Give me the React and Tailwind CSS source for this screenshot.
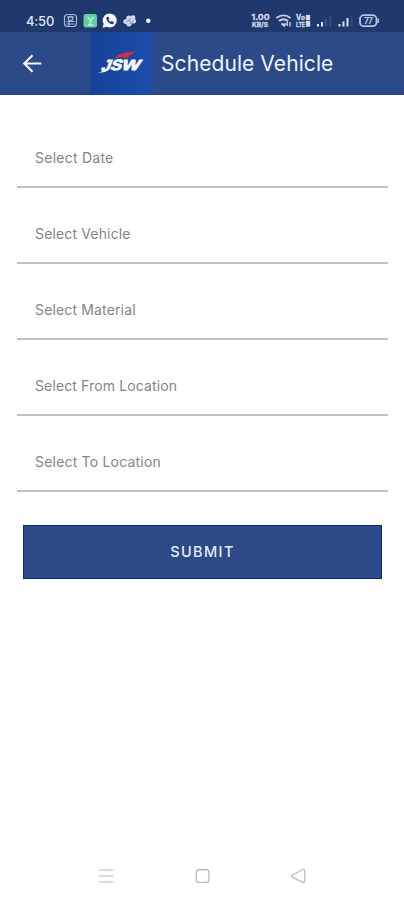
/**
 * Schedule Vehicle Page - form for booking a vehicle trip
 */

const fields = [
  { label: 'Select Date', tracking: 'tracking-[0.25px]' },
  { label: 'Select Vehicle', tracking: 'tracking-[0.15px]' },
  { label: 'Select Material', tracking: 'tracking-[0.15px]' },
  { label: 'Select From Location', tracking: 'tracking-[0.13px]' },
  { label: 'Select To Location', tracking: 'tracking-[0.2px]' },
];

function StatusBar() {
  return (
    <div className="flex h-8 items-start bg-[#1f396f] pl-[26px] pt-3">
      <span className="w-[34px] text-[13px] font-medium leading-[18px] tracking-[-0.2px] text-[#dfe6f7]">4:50</span>
      <svg width="344" height="18" viewBox="60 12 344 18" fill="none">
        {/* Notifications */}
        <g stroke="#a9b6d6" strokeWidth="1.2">
          <rect x="64.5" y="14.5" width="12" height="12" rx="3" />
          <circle cx="70.5" cy="18.5" r="2.2" />
          <path d="M67 17h7M66.5 21.5h8M66.5 24h8M69 21v5" />
        </g>
        <rect x="83.5" y="14" width="13.5" height="13.5" rx="2.5" fill="#62cfa3" />
        <path d="M87.5 17l3 3.5 3-3.5M90.5 20.5V25M88 25h5" stroke="#b9f3dc" strokeWidth="1.3" />
        <circle cx="109.7" cy="20.5" r="7" fill="#f4f6fc" />
        <path d="M103.5 24l-.8 3.8 4-1z" fill="#f4f6fc" />
        <path
          d="M106.3 17.4c0 3.6 3.2 6.7 6.7 6.7l1-1.8-2.2-1.3-1.1.9c-1-.5-1.8-1.3-2.2-2.2l.9-1.1-1.3-2.2z"
          fill="#1f396f"
        />
        <g fill="#ced7ec">
          <ellipse cx="126.5" cy="21.5" rx="3.2" ry="2.6" />
          <ellipse cx="129" cy="18" rx="2.8" ry="2.6" />
          <ellipse cx="133" cy="17.7" rx="2.4" ry="2.4" />
          <ellipse cx="133" cy="21" rx="3" ry="2.6" />
          <ellipse cx="129" cy="24.200" rx="2.600" ry="2.200" />
        </g>
        <path d="M126.500 22l4-3.500M129.500 24l4-3.500" stroke="#7186b3" strokeWidth="0.900" />
        <circle cx="148.300" cy="20.700" r="2.300" fill="#edf2ff" />

        {/* Network speed and signal */}
        <g fill="#d2d9ea" stroke="#d2d9ea" strokeWidth="0.300" fontWeight="700">
          <text x="251.500" y="20.200" fontSize="7.500" textLength="18" lengthAdjust="spacingAndGlyphs">1.00</text>
          <text x="252" y="27" fontSize="6.500" textLength="16" lengthAdjust="spacingAndGlyphs">KB/S</text>
        </g>
        <g stroke="#c8d1e5" strokeWidth="1.900">
          <path d="M276.500 18c4.200-3.500 9.800-3.500 14 0M279 21c2.700-2.200 6.300-2.200 9 0" />
          <path d="M281.500 23.500l2.500 2.200 2-2.200" fill="#c8d1e5" />
          <path d="M287.300 21.500v4.500M290 22v4.500" strokeWidth="1.400" />
        </g>
        <g fill="#d2d9ea" stroke="#d2d9ea" strokeWidth="0.300" fontWeight="700">
          <text x="296" y="20.200" fontSize="7" textLength="9" lengthAdjust="spacingAndGlyphs">Vo</text>
          <text x="296" y="27" fontSize="6.500" textLength="9" lengthAdjust="spacingAndGlyphs">LTE</text>
          <path d="M306 15h4v5h-4zM306 21h4v5.500h-4z" />
        </g>
        <g fill="#dce3f2">
          <rect x="317" y="24" width="2" height="2.500" />
          <rect x="321" y="22" width="2" height="4.500" />
          <rect x="325" y="19" width="1.500" height="7.500" fill="#455d90" />
          <rect x="329.500" y="15.500" width="1.500" height="11" fill="#38538a" />
          <rect x="338.500" y="24" width="2" height="2.500" />
          <rect x="342.500" y="21.500" width="2" height="5" />
          <rect x="346.500" y="18" width="2" height="8.500" />
          <rect x="351" y="15.500" width="1.500" height="11" fill="#2f4a80" />
        </g>

        {/* Battery */}
        <rect x="360" y="15.200" width="16.500" height="11" rx="4" stroke="#b9c4df" strokeWidth="1.800" />
        <path d="M378.200 18.500v4.500" stroke="#b9c4df" strokeWidth="1.500" />
        <text x="364" y="24" fontSize="8.500" fontWeight="600" fill="#c8d1e7" textLength="9">77</text>
      </svg>
    </div>
  );
}

function Logo() {
  return (
    <div className="ml-[47px] h-[63px] w-[63px] bg-linear-to-r from-[#164398] to-[#1c4da9]">
      <svg width="63" height="63" viewBox="0 0 63 63" className="font-['Liberation_Sans',sans-serif]">
        <g fill="#f5f7ff" stroke="#f5f7ff" strokeWidth="0.900" fontWeight="700" transform="translate(0 39) skewX(-20)">
          <text x="10.500" y="0" fontSize="16" textLength="9" lengthAdjust="spacingAndGlyphs">J</text>
          <text x="19.500" y="-1" fontSize="15" textLength="11" lengthAdjust="spacingAndGlyphs">S</text>
          <text x="30.500" y="-1" fontSize="14.500" textLength="18" lengthAdjust="spacingAndGlyphs">W</text>
        </g>
        <path d="M8 40.300c3 0 4.500-1 6-3.500l3.500 .5c-1.500 3-4.500 3.800-9.500 3z" fill="#f5f7ff" />
        <path d="M24.500 26.500C29 21.500 35 20.300 45 19.500c-2 2.300-4 3.800-7 4.500l2 .8c-2.500 1-4 1.100-6.500 .8-3 0-6 0-9 .9z" fill="#d52e43" />
      </svg>
    </div>
  );
}

function Header() {
  return (
    <header className="flex h-[63px] items-center border-b border-[#24427d] bg-[#2b4a87]">
      <button aria-label="Back" className="ml-[22px]">
        <svg width="21" height="21" viewBox="0 0 21 21" fill="none" stroke="#eff4ff" strokeWidth="2.200">
          <path d="M19.300 10.500H2.500M10.500 2.300l-8.200 8.200 8.200 8.200" />
        </svg>
      </button>
      <Logo />
      <h1 className="ml-2 whitespace-nowrap pt-0.5 text-[21px] tracking-[0.08px] text-[#f0f4ff]">Schedule Vehicle</h1>
    </header>
  );
}

function NavigationBar() {
  return (
    <nav className="mt-auto flex h-12 items-center justify-between px-[97px] text-[#bdbdbd]">
      <svg width="18" height="18" viewBox="0 0 18 18" stroke="#d0d0d0" strokeWidth="1.600">
        <path d="M2 3h14.500M2 9h14.500M2 15h14.500" />
      </svg>
      <svg width="18" height="18" viewBox="0 0 18 18" fill="none" stroke="currentColor" strokeWidth="1.400">
        <rect x="3.300" y="2.800" width="12.600" height="12.600" rx="2.500" />
      </svg>
      <svg width="18" height="18" viewBox="0 0 18 18" fill="none" stroke="currentColor" strokeWidth="1.300" strokeLinejoin="round">
        <path d="M3 8.200L13.800 2.500q2-.5 2 1.500v10q0 2-2 1.300L3 9.800q-1-.8 0-1.600z" />
      </svg>
    </nav>
  );
}

export default function App() {
  return (
    <div className="flex h-[900px] w-[404px] flex-col overflow-hidden bg-white font-['Inter',sans-serif]">
      <StatusBar />
      <Header />

      {/* Form */}
      <main className="pt-[17px]">
        {fields.map((field) => (
          <div
            key={field.label}
            className="ml-[17px] mr-4 flex h-19 items-end border-b-2 border-[#c2c2c2] pb-[17px] pl-[18px]"
          >
            <span className={`text-[14px] leading-[22px] text-[#858585] ${field.tracking}`}>{field.label}</span>
          </div>
        ))}

        <button className="ml-[23px] mt-[33px] flex h-[54px] w-[359px] items-center justify-center border border-[#082b72] bg-[#2b4a87] text-[14.5px] font-medium tracking-[1.4px] text-[#e3eaf9]">
          SUBMIT
        </button>
      </main>

      <NavigationBar />
    </div>
  );
}
